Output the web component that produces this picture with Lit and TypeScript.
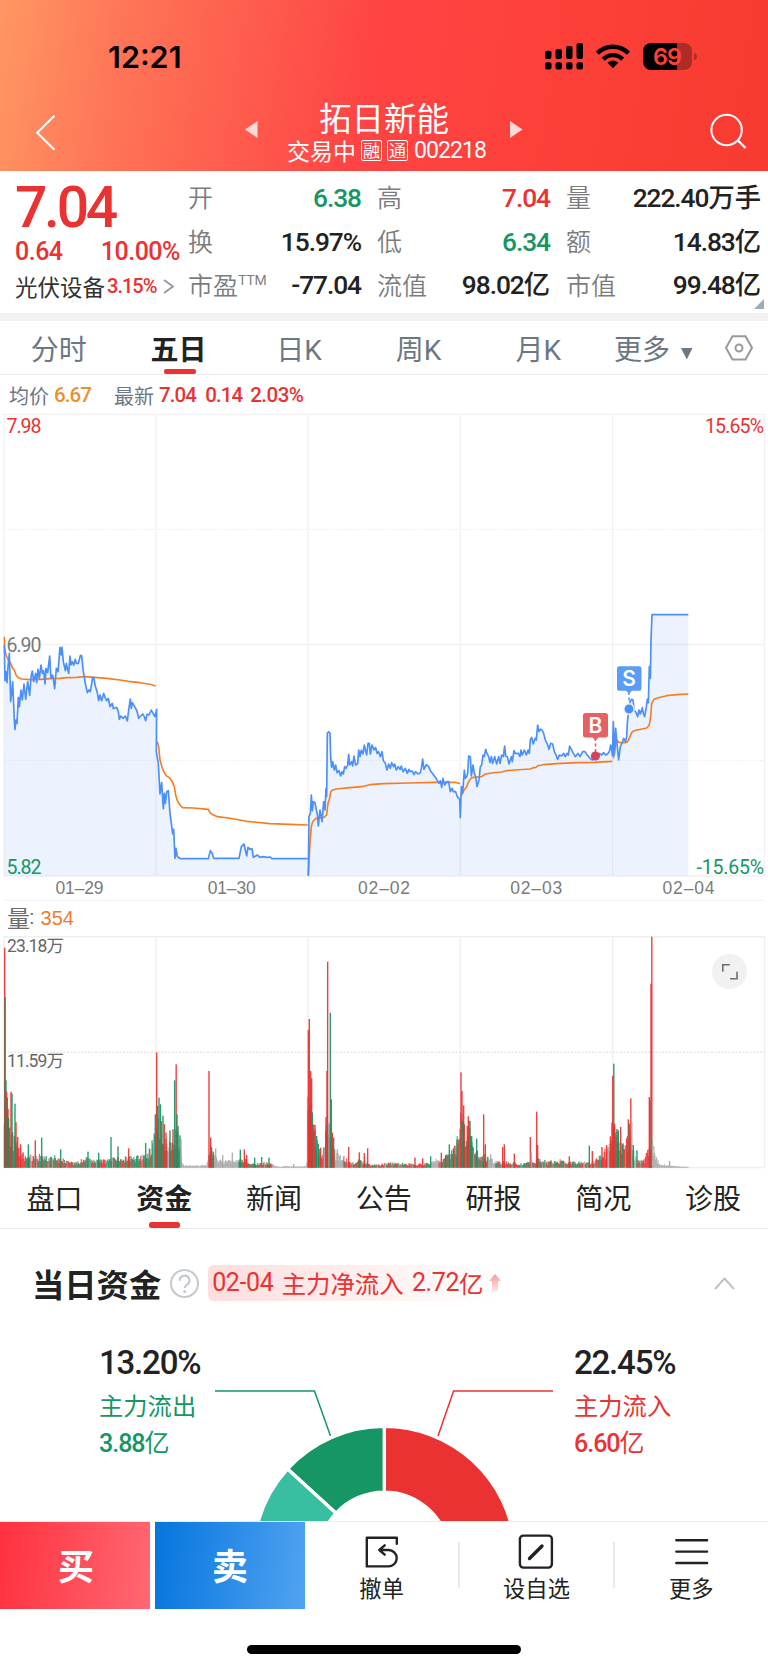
import { LitElement, html, svg, css } from "lit";
import { customElement } from "lit/decorators.js";
import { classMap } from "lit/directives/class-map.js";

const RED = "#ea3232";
const GREEN = "#159664";

/* Splits a value such as "222.40万手" so digits and characters get their own font. */
const mix = (s: string) =>
  (s.match(/[\x20-\x7e]+|[^\x20-\x7e]+/g) ?? []).map((p) =>
    /^[\x20-\x7e]/.test(p) ? html`<span class="num">${p}</span>` : html`<span>${p}</span>`
  );

const shared = css`
  :host {
    display: block;
    box-sizing: border-box;
    font-family: "Noto Sans CJK SC", sans-serif;
    color: #222;
    white-space: nowrap;
  }
  * { box-sizing: border-box; }
  svg { display: block; overflow: visible; }
  .num {
    font-family: Roboto, sans-serif;
    letter-spacing: -0.04em;
    white-space: pre;
  }
  .red { color: #ea3232; }
  .green { color: #159664; }
`;

@customElement("app-header")
class AppHeader extends LitElement {
  static styles = [
    shared,
    css`
      :host {
        height: 171px;
        background: linear-gradient(99deg, #ff9763 0%, #fe7557 16%, #fe4444 48%, #fd4039 70%, #f83b30 100%);
        color: #fff;
      }
      .status { display: flex; height: 98px; padding: 42px 71px 0 108px; }
      .time {
        flex: 1;
        font: 600 30.5px/30px Inter, sans-serif;
        color: #000;
        letter-spacing: 0;
      }
      .nav { display: flex; align-items: flex-start; height: 73px; }
      .back { width: 19px; margin: 17px 190px 0 36px; }
      .tri { margin-top: 23px; width: 13px; }
      .title { width: 252px; display: flex; flex-direction: column; align-items: center; }
      .name { font-size: 32.5px; line-height: 38px; font-weight: 400; }
      .sub { display: flex; align-items: center; height: 24px; margin: 2px 0 0 5px; font-size: 23px; line-height: 24px; }
      .tag {
        width: 21px;
        height: 21px;
        margin-left: 5px;
        border: 1px solid #fff;
        border-radius: 2px;
        font-size: 17px;
        line-height: 18px;
        text-align: center;
      }
      .code { margin: 1px 0 0 6px; font-size: 23px; }
      .search { margin: 15px 0 0 187px; }
    `,
  ];
  render() {
    const sig = [50.7, 49, 46, 43];
    return html`
      <div class="status">
        <div class="time">12:21</div>
        <svg width="153" height="30" viewBox="544 42 153 30">
          ${sig.map(
            (y, i) => svg`
            <rect x=${545 + i * 10.5} y=${y} width="6.5" height=${59 - y} rx="2"/>
            <rect x=${545 + i * 10.5} y="62.3" width="6.5" height="7.2" rx="2"/>`
          )}
          <g fill="none" stroke="#000" stroke-width="4.4">
            <path d="M597.4 53.2a21.8 21.8 0 0 1 31 0"/>
            <path d="M603.2 59.2a13.6 13.6 0 0 1 19.4 0"/>
          </g>
          <path d="M612.9 68.2l-5.4-5.4a7.7 7.7 0 0 1 10.8 0z"/>
          <path d="M677 43h7a8 8 0 0 1 8 8v11a8 8 0 0 1-8 8h-7z" fill="#ae2b27"/>
          <path d="M651 43h26v27h-26a8 8 0 0 1-8-8v-11a8 8 0 0 1 8-8z"/>
          <path d="M694 52.5q3 1.500 3 4t-3 4z" fill="#ae2b27"/>
          <text x="667.600" y="65" text-anchor="middle" font-family="Inter, sans-serif" font-size="23.500" font-weight="600" fill="#fe4039" textLength="29">69</text>
        </svg>
      </div>
      <div class="nav">
        <svg class="back" width="19" height="36" viewBox="36 115 19 36">
          <path d="M54.400 115.700L37.200 132.700L54.400 149.700" fill="none" stroke="#fff" stroke-width="2"/>
        </svg>
        <svg class="tri" width="13" height="17"><path d="M12.500 0v17L0 8.500z" fill="#ffd9d8"/></svg>
        <div class="title">
          <div class="name">拓日新能</div>
          <div class="sub">交易中<span class="tag">融</span><span class="tag">通</span><span class="num code">002218</span></div>
        </div>
        <svg class="tri" width="13" height="17"><path d="M0 0v17l12.500-8.500z" fill="#ffd9d8"/></svg>
        <svg class="search" width="38" height="38" viewBox="710 114 38 38">
          <g fill="none" stroke="#fff" stroke-width="2"><circle cx="726.600" cy="131" r="15.200"/><path d="M737.500 141l8 8" stroke-width="2.400"/></g>
        </svg>
      </div>
    `;
  }
}

@customElement("quote-panel")
class QuotePanel extends LitElement {
  static styles = [
    shared,
    css`
      :host { height: 150px; border-bottom: 8px solid #f1f1f1; background: #fff; }
      .panel { display: flex; height: 142px; padding-top: 4px; position: relative; }
      .main { width: 188px; padding-left: 15px; }
      .price { font-size: 57px; line-height: 60px; font-weight: 500; margin-top: -3px; }
      .price .num { letter-spacing: -3.300px; }
      .chg { display: flex; justify-content: space-between; padding-right: 8px; margin-top: -1px; font-size: 25px; line-height: 30px; font-weight: 500; }
      .chg .num { letter-spacing: -0.500px; }
      .sector { display: flex; align-items: center; height: 34px; margin-top: 2px; font-size: 22.500px; color: #333; }
      .sector .num { font-size: 20px; margin-left: 2px; letter-spacing: -1px; font-weight: 500; }
      .sector svg { margin-left: 7px; }
      .cols { display: grid; grid-template-columns: 173px 173px 195px; column-gap: 16px; grid-auto-rows: 43.700px; flex: 1; }
      .cell { display: flex; justify-content: space-between; align-items: center; line-height: 43px; }
      .label { font-size: 25px; color: #7c7c7c; font-weight: 350; }
      sup { font: 13.500px/13px Inter, sans-serif; vertical-align: 10px; letter-spacing: -0.500px; }
      .value { font-size: 26.300px; font-weight: 500; }
      .corner { position: absolute; right: 4px; bottom: 4px; }
    `,
  ];
  render() {
    const rows: [string, string, string][] = [
      ["开", "6.38", "green"], ["高", "7.04", "red"], ["量", "222.40万手", ""],
      ["换", "15.97%", ""], ["低", "6.34", "green"], ["额", "14.83亿", ""],
      ["市盈", "-77.04", ""], ["流值", "98.02亿", ""], ["市值", "99.48亿", ""],
    ];
    return html`
      <div class="panel">
        <div class="main">
          <div class="price red"><span class="num">7.04</span></div>
          <div class="chg red"><span class="num">0.64</span><span class="num">10.00%</span></div>
          <div class="sector">
            光伏设备<span class="num red">3.15%</span>
            <svg width="11" height="15"><path d="M1 1l9 6.500-9 6.500" fill="none" stroke="#8e99a5" stroke-width="1.800"/></svg>
          </div>
        </div>
        <div class="cols">
          ${rows.map(
            ([l, v, c]) => html`<div class="cell">
              <span class="label">${l}${l === "市盈" ? html`<sup>TTM</sup>` : ""}</span>
              <span class="value ${c}">${mix(v)}</span>
            </div>`
          )}
        </div>
        <svg class="corner" width="10" height="10"><path d="M10 0v10H0z" fill="#9eabb8"/></svg>
      </div>
    `;
  }
}

@customElement("period-tabs")
class PeriodTabs extends LitElement {
  static styles = [
    shared,
    css`
      :host { height: 54px; border-bottom: 1px solid #eaeaea; }
      .tabs { display: flex; height: 54px; padding-right: 15px; }
      .tab {
        width: 119.600px;
        display: flex;
        flex-direction: column;
        align-items: center;
        font-size: 28px;
        line-height: 48px;
        height: 54px;
        padding-top: 3px;
        color: #6c7784;
      }
      .tab:first-child { padding-right: 2px; }
      .tab.on { color: #222; font-weight: 700; padding-right: 2px; }
      .tab.on i { width: 32px; height: 5px; border-radius: 2px; background: #ea3232; margin: -3.500px 0 0 3px; }
      .num { letter-spacing: 0; }
      .tab.more { flex-direction: row; align-items: flex-start; width: 110px; padding-left: 16px; }
      .more svg { margin: 23px 0 0 11px; }
      .hex { margin: 14px 0 0 auto; }
    `,
  ];
  render() {
    return html`<div class="tabs">
      ${["分时", "五日", "日K", "周K", "月K"].map(
        (t) => html`<div class=${classMap({ tab: true, on: t === "五日" })}><span>${mix(t)}</span><i></i></div>`
      )}
      <div class="tab more">更多<svg width="12" height="13"><path d="M0 1h11.500L5.800 12.500z" fill="#6c7784"/></svg></div>
      <svg class="hex" width="28" height="26" fill="none" stroke="#999" stroke-width="2">
        <path d="M7.500 1.300h13L27 12.800l-6.500 11.700h-13L1 12.800z"/><circle cx="14" cy="13" r="3.500"/>
      </svg>
    </div>`;
  }
}

/* Chart traces are kept at three units per pixel. */
const avgLines = [
  "13,80 14,115 18,135 25,150 32,160 38,175 43,180 48,195 55,203 65,207 90,209 120,208 150,206 180,205 200,203 230,202 255,200 320,205 360,210 385,214 420,218 450,223 467,228",
  "472,395 476,410 480,450 487,475 494,490 500,498 507,502 515,512 523,530 527,555 532,572 540,585 548,593 580,594 625,598 630,608 636,613 652,620 690,625 740,634 810,641 870,643 923,645",
];
const avgLines2 = [
  "25,797 30,700 34,650 38,635 46,626 60,624 72,622 80,615 84,580 89,565 92,547 97,540 110,537 150,533 185,530 210,524 250,521 330,519 400,517 440,517 465,517 480,521",
  "483,560 487,548 493,540 500,530 507,512 515,503 545,500 556,492 575,489 605,486 620,482 690,477 700,473 708,472 714,467 730,464 770,461 830,458 880,457 937,454",
  "940,445 944,420 948,395 953,392 957,398 967,398 975,398 983,395 990,380 995,368 1002,362 1015,359 1030,356 1040,354 1048,345 1052,320 1055,280 1062,268 1075,263 1100,257 1130,254 1165,252",
];
const priceA =
  "13,105 15,212 18,185 21,218 24,170 28,130 30,200 32,275 35,250 38,215 40,260 43,330 45,358 48,330 51,340 55,262 58,290 63,240 67,270 72,222 77,268 83,215 89,256 93,200 97,183 101,215 107,190 110,218 114,178 118,205 123,165 127,190 131,182 135,222 138,175 143,188 149,138 153,205 158,195 164,236 169,175 174,185 180,112 183,135 186,112 190,155 196,182 199,160 202,175 206,190 210,138 213,165 217,155 221,166 226,148 229,160 235,160 241,137 245,137 250,185 256,220 262,248 267,240 271,245 278,202 282,205 285,225 292,248 296,272 300,255 305,272 311,250 315,262 320,272 325,265 330,290 337,280 340,296 350,292 355,305 358,328 362,318 370,325 376,318 382,333 386,300 391,267 394,295 397,278 404,290 411,303 416,325 422,318 428,312 433,320 437,332 441,313 447,315 454,300 460,312 465,320 470,298 469,425 475,460 480,552 485,518 490,596 493,550 496,580 500,545 505,542 510,610 514,640 518,672 521,658 525,745 528,715 532,740 536,742 540,746 625,746 631,722 636,728 641,745 717,745 724,710 732,702 740,738 744,712 750,718 756,716 760,742 772,735 780,742 790,740 800,742 810,741 816,746 923,746";
const priceB =
  "25,797 27,620 31,610 34,555 37,602 40,575 45,578 49,600 52,612 55,648 60,600 66,635 71,575 75,600 78,535 80,560 82,370 86,365 90,370 92,440 95,472 98,455 103,480 107,465 111,488 117,482 122,498 126,485 130,492 134,470 138,475 143,465 146,433 149,465 155,455 158,468 162,438 167,465 173,460 176,420 180,440 184,420 189,432 193,405 196,420 200,435 204,400 208,400 211,432 216,405 222,420 227,412 231,430 236,425 241,440 246,425 250,452 256,460 261,480 266,462 271,475 275,458 281,470 284,462 289,480 295,470 300,478 304,468 309,485 316,475 322,490 327,478 331,485 337,483 342,494 347,485 354,492 361,488 364,475 368,447 372,478 379,464 386,470 391,482 397,490 403,498 410,508 417,520 421,512 425,532 429,505 434,525 440,515 446,515 451,545 456,535 460,545 467,545 472,560 479,568 481,623 484,530 488,550 493,480 496,505 500,500 503,490 506,438 511,440 514,498 519,465 523,490 527,500 531,530 537,510 541,470 545,465 549,435 553,440 557,418 561,430 566,440 570,458 574,440 578,460 584,440 590,462 596,440 600,460 605,435 610,440 614,408 617,438 622,440 627,462 634,440 637,455 642,422 646,430 655,430 660,440 663,420 667,435 673,420 679,435 684,420 688,430 691,390 695,382 700,402 705,385 709,390 713,345 717,365 721,358 726,360 731,370 736,390 741,400 747,418 752,400 758,402 763,425 768,435 773,448 778,435 785,438 791,430 796,440 801,430 805,435 809,408 814,418 819,428 826,440 834,430 840,440 848,425 855,425 862,435 870,445 877,450 884,438 892,440 898,430 905,435 910,428 918,435 924,430 928,425 932,405 936,425 937,437 940,335 943,435 947,355 951,400 956,450 961,410 966,400 971,385 976,395 980,380 982,340 985,310 988,297 990,275 995,268 999,270 1003,300 1008,308 1013,320 1017,300 1021,312 1027,293 1030,310 1034,320 1039,290 1042,268 1045,278 1048,170 1051,205 1053,90 1056,14 1165,14";

const gridX = [4, 156, 308, 460.3, 612.6, 764.5];

@customElement("price-chart")
class PriceChart extends LitElement {
  static styles = [
    shared,
    css`
      .legend { display: flex; align-items: center; height: 39px; padding: 1px 0 0 9px; font-size: 20px; color: #6c7784; }
      .legend .num { font-size: 20.500px; font-weight: 500; margin-left: 5px; letter-spacing: -0.900px; }
      .legend .avg { color: #ee8f2c; margin-right: 23px; }
      .legend .red + .red { margin-left: 9px; }
      .legend .num.pct { margin-left: 8px; letter-spacing: -0.500px; }
      .din { font-family: Roboto, sans-serif; font-size: 19.500px; }
      .date { font-family: "Liberation Sans", sans-serif; font-size: 17.500px; fill: #7b7b7b; }
      .mark { font-family: Inter, sans-serif; font-size: 21px; font-weight: 600; fill: #fff; }
    `,
  ];
  render() {
    const dates: [string, number][] = [["01–29", 79.5], ["01–30", 231.7], ["02–02", 384], ["02–03", 536.2], ["02–04", 688.5]];
    return html`
      <div class="legend">
        均价<span class="num avg">6.67</span>最新<span class="num red">7.04</span><span class="num red">0.14</span><span class="num red pct">2.03%</span>
      </div>
      <svg width="768" height="486" viewBox="0 414 768 486">
        <g fill="none" stroke="#f1f1f3" stroke-width="1.300">
          <path d="M4 414.500H764.500M4 644.500H764.500M4 876H764.500M4 900.300H764.500"/>
          ${gridX.map((x) => svg`<path d="M${x} 414V876"/>`)}
          <path d="M4 529.300H764.500M4 760.300H764.500" stroke-dasharray="2 1.500"/>
        </g>
        <g transform="translate(0 610) scale(.33333)" stroke-linejoin="round">
          <polygon points="12,797 ${priceA} 923,797" fill="#4a8cfa" fill-opacity=".105"/>
          <g transform="translate(900 0)"><polygon points="${priceB} 1165,797" fill="#4a8cfa" fill-opacity=".105"/></g>
          <g fill="none" stroke="#f87c1e" stroke-width="4.800">
            ${avgLines.map((p) => svg`<polyline points=${p}/>`)}
            <g transform="translate(900 0)">${avgLines2.map((p) => svg`<polyline points=${p}/>`)}</g>
          </g>
          <g fill="none" stroke="#4a8ffc" stroke-width="5">
            <polyline points=${priceA}/>
            <polyline points=${priceB} transform="translate(900 0)"/>
          </g>
        </g>
        <g>
          <path d="M595.500 738v14" stroke="#e05563" stroke-width="1.500" stroke-dasharray="3 2.500"/>
          <circle cx="595.400" cy="756" r="4.600" fill="#d5405a"/>
          <path d="M585.500 713h20a2.500 2.500 0 0 1 2.500 2.500v19.500a2.500 2.500 0 0 1-2.500 2.500h-7l-3 3-3-3h-7a2.500 2.500 0 0 1-2.500-2.500v-19.500a2.500 2.500 0 0 1 2.500-2.500z" fill="#e86063"/>
          <text class="mark" x="595.500" y="733" text-anchor="middle">B</text>
          <path d="M629 692v12" stroke="#4a8ffc" stroke-width="1.500" stroke-dasharray="3 2.500"/>
          <circle cx="629" cy="709" r="5.200" fill="#4a90f5" stroke="#eef4fe" stroke-width="1.500"/>
          <path d="M619.500 666.300h19.500a2.500 2.500 0 0 1 2.500 2.500v19.500a2.500 2.500 0 0 1-2.500 2.500h-7l-3 3-3-3h-6.500a2.500 2.500 0 0 1-2.500-2.500v-19.500a2.500 2.500 0 0 1 2.500-2.500z" fill="#5a9cf6"/>
          <text class="mark" x="629" y="686.300" text-anchor="middle">S</text>
        </g>
        <g class="din">
          <text x="6.500" y="432.500" fill=${RED} textLength="35">7.98</text>
          <text x="705" y="432.500" fill=${RED} textLength="59">15.65%</text>
          <text x="6.500" y="651.500" fill="#74797f" textLength="35">6.90</text>
          <text x="6.500" y="873.500" fill=${GREEN} textLength="35">5.82</text>
          <text x="696.500" y="873.500" fill=${GREEN} textLength="67.500">-15.65%</text>
        </g>
        ${dates.map(([d, x]) => svg`<text class="date" x=${x} y="894.300" text-anchor="middle" textLength=${d.startsWith("01") ? 48 : 52}>${d}</text>`)}
      </svg>
    `;
  }
}

/* Notable volume bars: [x, height, colour], three units per pixel. */
type Bar = [number, number, "r" | "g" | "n"];
const spikes: Bar[] = [
  [14, 660, "r"], [15.5, 512, "g"], [18, 262, "g"], [20, 228, "r"], [22, 210, "g"], [24, 176, "r"], [26, 150, "g"], [29, 120, "r"], [33, 228, "r"], [36, 222, "g"], [45, 192, "g"], [48, 136, "r"], [53, 92, "r"], [62, 70, "r"], [85, 70, "g"], [106, 82, "r"], [125, 90, "g"], [182, 55, "g"], [264, 48, "g"], [296, 45, "g"], [333, 92, "g"], [354, 64, "g"], [386, 58, "r"], [437, 74, "g"],
  [461, 85, "n"], [466, 160, "g"], [470, 346, "r"], [473, 185, "g"], [477, 210, "g"], [481, 190, "g"], [484, 140, "r"], [489, 156, "g"], [493, 130, "r"], [498, 105, "r"], [510, 112, "g"], [519, 115, "r"], [524, 262, "g"], [528.5, 310, "r"], [531, 160, "g"], [534, 125, "g"], [540, 97, "g"], [543, 85, "n"], [627, 290, "r"], [632, 90, "r"], [635, 60, "g"], [640, 48, "g"], [647, 58, "n"], [668, 38, "n"], [697, 45, "n"], [721, 54, "g"], [733, 55, "r"], [740, 38, "r"], [764, 30, "g"], [785, 32, "g"], [807, 30, "g"], [881, 11, "n"],
  [925, 413, "r"], [928, 446, "r"], [932, 290, "r"], [935, 268, "r"], [937, 166, "g"], [939, 128, "r"], [945, 128, "r"], [950, 95, "g"], [955, 72, "g"], [962, 60, "r"], [973, 62, "n"], [978, 152, "r"], [981, 290, "r"], [983, 618, "r"], [987, 135, "n"], [991, 465, "g"], [994, 205, "g"], [997, 105, "r"], [1001, 90, "g"], [1012, 55, "n"], [1046, 62, "r"], [1078, 46, "r"], [1093, 44, "r"], [1103, 58, "r"], [1245, 30, "r"], [1268, 28, "r"], [1292, 34, "g"], [1324, 45, "r"], [1337, 38, "r"], [1348, 70, "g"], [1360, 58, "g"], [1371, 84, "g"],
  [1383, 286, "r"], [1386, 230, "r"], [1391, 187, "r"], [1387, 140, "g"], [1393, 130, "r"], [1402, 125, "r"], [1405, 154, "r"], [1410, 140, "g"], [1415, 95, "g"], [1430, 87, "g"], [1451, 160, "r"], [1456, 70, "r"], [1472, 40, "n"], [1508, 62, "r"], [1513, 70, "r"], [1543, 42, "r"], [1591, 92, "r"], [1594, 46, "n"], [1610, 168, "r"], [1613, 68, "r"], [1708, 34, "r"], [1768, 66, "g"], [1777, 50, "r"], [1806, 62, "r"], [1820, 68, "r"], [1831, 94, "r"],
  [1836, 135, "g"], [1838, 276, "r"], [1841.5, 312, "g"], [1844, 132, "r"], [1851, 116, "g"], [1855, 112, "g"], [1862, 122, "r"], [1868, 70, "g"], [1880, 88, "r"], [1885, 145, "r"], [1888, 132, "g"], [1892.5, 208, "r"], [1895.5, 136, "n"], [1900, 68, "g"], [1911, 52, "g"], [1948, 212, "r"], [1950, 202, "g"], [1953, 552, "r"], [1955.5, 693, "r"], [1957.5, 85, "n"], [2009, 20, "n"],
];
/* Upper envelope of the ordinary bars and the trend tint of each stretch. */
const envelope: [number, number, "m" | "n"][] = [
  [12, 220, "m"], [26, 130, "m"], [40, 95, "m"], [60, 55, "m"], [80, 38, "m"], [110, 38, "m"], [150, 40, "m"], [200, 22, "m"], [225, 14, "m"], [260, 33, "m"], [310, 24, "m"], [360, 30, "m"], [400, 34, "m"], [445, 45, "m"], [464, 110, "m"], [475, 180, "m"], [495, 85, "m"], [508, 70, "m"], [530, 130, "m"], [540, 80, "n"], [546, 25, "n"], [552, 7, "n"], [595, 6, "n"], [620, 9, "n"], [628, 75, "m"], [642, 40, "n"], [660, 22, "n"], [716, 22, "m"], [740, 28, "m"], [750, 12, "m"], [800, 16, "m"], [816, 11, "n"], [830, 4, "n"], [920, 5, "n"], [923, 260, "m"], [936, 150, "m"], [950, 80, "m"], [968, 40, "m"], [980, 140, "m"], [995, 110, "m"], [1005, 45, "n"], [1030, 35, "m"], [1052, 14, "m"], [1080, 26, "m"], [1115, 10, "m"], [1180, 16, "m"], [1250, 11, "m"], [1290, 15, "n"], [1315, 28, "m"], [1350, 40, "m"], [1368, 70, "m"], [1385, 170, "m"], [1398, 80, "m"], [1408, 140, "m"], [1420, 60, "m"], [1440, 42, "m"], [1465, 38, "n"], [1485, 20, "m"], [1520, 18, "m"], [1570, 12, "m"], [1620, 28, "m"], [1645, 18, "m"], [1670, 28, "m"], [1700, 17, "m"], [1770, 18, "m"], [1800, 35, "m"], [1825, 65, "m"], [1842, 140, "m"], [1858, 90, "m"], [1873, 60, "m"], [1888, 120, "m"], [1902, 50, "n"], [1915, 24, "m"], [1935, 28, "m"], [1947, 80, "m"], [1957, 90, "n"], [1966, 40, "n"], [1978, 14, "n"], [2000, 9, "n"], [2030, 5, "n"], [2065, 2, "n"],
];
const tint = { r: "#eb3030", g: "#129562", n: "#a9a9a9" };
const ordinaryBars = (): Bar[] => {
  const out: Bar[] = [];
  let seed = 17;
  const rnd = () => (seed = (seed * 16807) % 2147483647) / 2147483647;
  let k = 0;
  for (let x = 13; x < 2065; x += 2.1) {
    while (envelope[k + 1][0] < x) k++;
    const [x0, h0, m] = envelope[k];
    const [x1, h1] = envelope[k + 1];
    const top = h0 + ((h1 - h0) * (x - x0)) / (x1 - x0);
    const r = rnd();
    out.push([x, top * (0.45 + 0.65 * rnd()), m === "n" ? "n" : r < 0.47 ? "r" : r < 0.93 ? "g" : "n"]);
  }
  return out;
};

@customElement("volume-chart")
class VolumeChart extends LitElement {
  static styles = [
    shared,
    css`
      :host { position: relative; }
      .legend { display: flex; align-items: center; height: 36px; padding: 0 0 2px 7px; font-size: 23px; color: #6b6b6b; }
      .legend b { font: 400 20px/24px "Liberation Sans", sans-serif; color: #f07a30; margin: 2px 0 0 6px; }
      .legend i { font: 400 20px/24px "Liberation Sans", sans-serif; margin-left: -1px; }
      text { font-size: 17.500px; fill: #666; font-family: Roboto, "Noto Sans CJK SC", sans-serif; }
      .expand {
        position: absolute;
        right: 21.500px;
        top: 53.500px;
        width: 35px;
        height: 35px;
        border-radius: 50%;
        background: #f1f1f1;
      }
    `,
  ];
  render() {
    const bar = (opacity: number, w: number) => ([x, h, c]: Bar) =>
      svg`<rect x=${x - w / 2} y=${863 - h} width=${w} height=${h} fill=${tint[c]} fill-opacity=${opacity}/>`;
    return html`
      <div class="legend">量<i>:</i><b>354</b></div>
      <svg width="768" height="232" viewBox="0 936 768 232">
        <g fill="none" stroke="#efeff1" stroke-width="1.400">
          <path d="M4 936.800H764.500M4 1167.500H764.500"/>
          ${gridX.map((x) => svg`<path d="M${x} 936V1167.500"/>`)}
          <path d="M4 1052.300H764.500" stroke="#e6e6e8" stroke-dasharray="2 1.500"/>
        </g>
        <g transform="translate(0 880) scale(.33333)">${ordinaryBars().map(bar(0.8, 3.6))}${spikes.map(bar(0.92, 4.2))}</g>
        <text x="7" y="951.800" textLength="57">23.18万</text>
        <text x="7" y="1067" textLength="57">11.59万</text>
      </svg>
      <svg class="expand" width="35" height="35" fill="none" stroke="#6f6f6f" stroke-width="1.600">
        <path d="M10.800 17.800v-7h7M18 24.700h7v-7"/>
      </svg>
    `;
  }
}

@customElement("section-tabs")
class SectionTabs extends LitElement {
  static styles = [
    shared,
    css`
      :host { height: 61px; border-bottom: 1.500px solid #ececec; }
      .tabs { display: flex; justify-content: space-between; padding: 0 27px 0 26.500px; height: 60px; }
      .tab { display: flex; flex-direction: column; align-items: center; font-size: 28px; line-height: 58px; height: 60px; }
      .tab.on { font-weight: 700; }
      .tab.on i { width: 31px; height: 5.500px; border-radius: 2.500px; background: #ea3232; margin-top: -4px; }
    `,
  ];
  render() {
    return html`<div class="tabs">
      ${["盘口", "资金", "新闻", "公告", "研报", "简况", "诊股"].map(
        (t) => html`<div class=${classMap({ tab: true, on: t === "资金" })}>${t}<i></i></div>`
      )}
    </div>`;
  }
}

@customElement("fund-flow")
class FundFlow extends LitElement {
  static styles = [
    shared,
    css`
      :host { height: 292px; overflow: hidden; }
      .head { display: flex; align-items: center; height: 36px; margin-top: 37px; padding: 0 33px 0 32px; }
      h2 { margin: -3px 0 0; font-size: 32.300px; line-height: 36px; font-weight: 700; }
      .help { margin: -1px 8px 0 8px; }
      .badge {
        display: flex;
        align-items: center;
        width: 291px;
        height: 36px;
        margin-top: -2px;
        padding-left: 4px;
        border-radius: 6px;
        font-size: 24.400px;
        line-height: 34px;
        color: #ea3232;
        background: linear-gradient(90deg, #fedddd, #fff);
      }
      .badge .num { font-size: 25px; letter-spacing: -0.400px; word-spacing: 2.500px; }
      .badge svg { margin-left: 6px; }
      .up { margin: -1px 0 0 auto; }
      .chart { display: grid; grid-template-columns: 99px 116px 338px 21px 1fr; height: 219px; }
      .info { padding-top: 34px; width: 116px; }
      .pct { font-size: 33px; line-height: 49px; font-weight: 500; }
      .pct .num { letter-spacing: -1.200px; }
      .name { font-size: 24.300px; line-height: 37px; margin-top: -1px; }
      .amt { font-size: 25px; line-height: 37px; }
      .amt .num { font-weight: 500; }
    `,
  ];
  render() {
    const info = (p: string, n: string, a: string, c: string) => html`<div class="info">
      <div class="pct"><span class="num">${p}</span></div>
      <div class="name ${c}">${n}</div>
      <div class="amt ${c}">${mix(a)}</div>
    </div>`;
    const pt = (r: number, deg: number) => {
      const a = (deg * Math.PI) / 180;
      return `${384.3 + r * Math.sin(a)} ${1557.6 - r * Math.cos(a)}`;
    };
    const slice = (a: number, b: number, c: string) =>
      svg`<path d="M${pt(131.2, a)}A131.200 131.200 0 0 1 ${pt(131.2, b)}L${pt(65.5, b)}A65.500 65.500 0 0 0 ${pt(65.5, a)}Z" fill=${c} stroke="#fff" stroke-width="3.400"/>`;
    return html`
      <div class="head">
        <h2>当日资金</h2>
        <svg class="help" width="31" height="31">
          <circle cx="15.500" cy="15.500" r="13.500" fill="none" stroke="#c3c9cf" stroke-width="2"/>
          <path d="M10.800 12.800a4.800 4.800 0 1 1 7.300 3.800c-1.600 1-2.400 1.700-2.400 3.400" fill="none" stroke="#c3c9cf" stroke-width="2.200"/>
          <circle cx="15.700" cy="23.500" r="1.500" fill="#c3c9cf"/>
        </svg>
        <div class="badge">
          <span class="num">02-04 </span><span>主力净流入</span><span class="num"> 2.72</span><span>亿</span>
          <svg width="12" height="18">
            <defs><linearGradient id="fade" x1="0" y1="0" x2="0" y2="1"><stop offset="0" stop-color="#f59a9a"/><stop offset="1" stop-color="#fde8e8"/></linearGradient></defs>
            <path d="M6 0l6 7H9v10.500H3V7H0z" fill="url(#fade)"/>
          </svg>
        </div>
        <svg class="up" width="21" height="13"><path d="M1 12L10.500 1.500 20 12" fill="none" stroke="#bcc2c8" stroke-width="1.900"/></svg>
      </div>
      <div class="chart">
        <span></span>
        ${info("13.20%", "主力流出", "3.88亿", "green")}
        <svg width="338" height="219" viewBox="215 1302 338 219">
          ${slice(0, 85, "#ea3232")}${slice(-47.5, 0, "#159664")}${slice(-100, -47.5, "#39bea2")}
          <g fill="none" stroke-width="1.500">
            <path d="M215 1391H314.500L330.500 1436" stroke="#159664"/>
            <path d="M553 1391H453.600L438 1436" stroke="#ea3232"/>
          </g>
        </svg>
        <span></span>
        ${info("22.45%", "主力流入", "6.60亿", "red")}
      </div>
    `;
  }
}

@customElement("action-bar")
class ActionBar extends LitElement {
  static styles = [
    shared,
    css`
      :host { height: 148px; background: #fff; border-top: 1px solid #ededed; position: relative; }
      .bar { display: flex; height: 87px; }
      .btn { width: 150px; color: #fff; font-size: 36px; font-weight: 700; line-height: 84px; text-align: center; }
      .buy { background: linear-gradient(97deg, #ff313f, #ff6873); margin-right: 5px; padding-left: 2px; }
      .sell { background: linear-gradient(97deg, #0575de, #51a3f1); }
      .item {
        display: flex;
        flex-direction: column;
        align-items: center;
        justify-content: flex-start;
        flex: 1;
        padding-top: 12px;
        font-size: 22.300px;
        line-height: 32px;
      }
      .item svg { margin-bottom: 1px; }
      .sep { width: 1.500px; height: 46px; margin-top: 20px; background: #e9e9e9; }
      .home { width: 274px; height: 9px; border-radius: 5px; background: #000; margin: 36px auto 0 247px; }
    `,
  ];
  render() {
    return html`
      <div class="bar">
        <div class="btn buy">买</div>
        <div class="btn sell">卖</div>
        <div class="item">
          <svg width="35" height="36" viewBox="366 1534 35 36" fill="none" stroke="#222" stroke-width="2.400" stroke-linecap="round" stroke-linejoin="round">
            <path d="M398.800 1543.800V1537.800H368.800V1566.400H390.500A8.200 8.200 0 0 0 390.500 1550H381.500M386.700 1545.300L381.300 1550L386.700 1554.700"/>
          </svg>
          撤单
        </div>
        <div class="sep"></div>
        <div class="item">
          <svg width="36" height="36" viewBox="519 1534 36 36" fill="none" stroke="#222" stroke-width="2.400" stroke-linecap="round">
            <rect x="520.900" y="1535.600" width="32" height="32" rx="3.500"/><path d="M530.500 1558.500L543 1546" stroke-width="3.400"/>
          </svg>
          设自选
        </div>
        <div class="sep"></div>
        <div class="item">
          <svg width="35" height="36" viewBox="673 1534 35 36" fill="none" stroke="#222" stroke-width="2.400" stroke-linecap="round">
            <path d="M675.300 1540.300h30.800M675.300 1551.600h30.800M675.300 1563h30.800"/>
          </svg>
          更多
        </div>
      </div>
      <div class="home"></div>
    `;
  }
}

@customElement("app-root")
class AppRoot extends LitElement {
  static styles = css`
    :host { display: flex; flex-direction: column; width: 768px; height: 1669px; overflow: hidden; background: #fff; }
    :host > * { flex: none; }
  `;
  render() {
    return html`
      <app-header></app-header>
      <quote-panel></quote-panel>
      <period-tabs></period-tabs>
      <price-chart></price-chart>
      <volume-chart></volume-chart>
      <section-tabs></section-tabs>
      <fund-flow></fund-flow>
      <action-bar></action-bar>
    `;
  }
}
